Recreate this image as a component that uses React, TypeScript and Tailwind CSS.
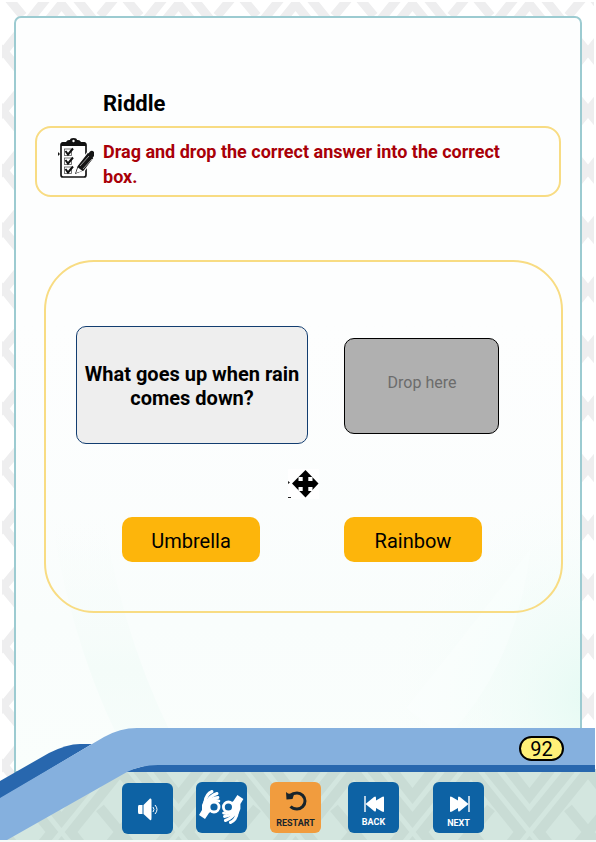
import React from "react";

const font = "font-['Roboto','Liberation_Sans',sans-serif]";

// One repeat of the woven diamond wallpaper, centred on a diamond.
function DiamondTile({ color, width }: { color: string; width: number }) {
  return (
    <g fill="none" stroke={color} strokeWidth={width}>
      <path d="M58.500 -12L116 59.500L58.500 131L1 59.500Z" />
      <path d="M58.500 12L97 59.500L58.500 107L20 59.500Z" />
      <path d="M58.500 36L77 59.500L58.500 83L40 59.500Z" />
      <path d="M-20 24L0 0L20 24M97 24L117 0L137 24M-20 95L0 119L20 95M97 95L117 119L137 95" />
    </g>
  );
}

function MarginWallpaper() {
  return (
    <svg className="absolute inset-0 h-full w-full" aria-hidden="true">
      <defs>
        <pattern id="margin" width="117" height="119" x="1" y="-10" patternUnits="userSpaceOnUse">
          <DiamondTile color="#eeeeef" width={9} />
        </pattern>
      </defs>
      <rect width="100%" height="100%" fill="url(#margin)" />
    </svg>
  );
}

function Clipboard() {
  return (
    <svg className="mt-[10px] ml-[21px] h-[42px] w-[37px] shrink-0" viewBox="0 0 37 42">
      <rect x="3" y="5" width="25" height="34" rx="2" fill="white" stroke="#151515" strokeWidth="1.700" />
      <path d="M3 8V5.500Q3 4 5 4H8Q9 2 11 2H12Q12 0 15.500 0Q19 0 19 2H20Q22 2 23 4H26Q28 4 28 6V8Z" fill="#111" />
      <circle cx="15.500" cy="3" r="1.200" fill="white" />
      <g fill="white" stroke="#555" strokeWidth=".8">
        <rect x="6.500" y="11" width="7" height="6.500" /><rect x="6.500" y="20" width="7" height="6.500" /><rect x="6.500" y="29" width="7" height="6.500" />
      </g>
      <path d="M7.500 13L10 16.500L15 10.500M7.500 22L10 25.500L15 19.500M7.500 31L10 34.500L15 28.500" fill="none" stroke="#111" strokeWidth="2" />
      <path d="M16 37L19 28L30 14L36 20L26 33Z" fill="#151515" stroke="white" strokeWidth="1.200" />
      <path d="M18 35L20 29.500L24.500 33Z" fill="white" />
      <path d="M22 28L31 18M25 31L34 21" stroke="#bbb" strokeWidth=".8" />
      <path d="M30 16L32 13.500Q34 12 36 14V18L34.500 20Z" fill="#151515" />
      <path d="M0 14L2 16L0 18Z" fill="#151515" />
    </svg>
  );
}

function MoveIcon() {
  return (
    <svg className="mt-[25px] ml-[242px] h-[30px] w-[31px] shrink-0" viewBox="0 0 31 30">
      <rect width="31" height="30" fill="white" />
      <path d="M17.500 1L30.500 14.500L17.500 28.500L4 14.500Z" fill="black" />
      <g fill="white"><rect x="10.500" y="8" width="4.200" height="4" /><rect x="20.300" y="8" width="4.200" height="4" /><rect x="10.500" y="18" width="4.200" height="4" /><rect x="20.300" y="18" width="4.200" height="4" /></g>
      <path d="M0 12L2 13.500L0 15ZM0 28H3V29H0Z" fill="#222" />
    </svg>
  );
}

function Hand() {
  return (
    <>
      <path d="M3 33L6 28V23Q7 19 10 16L18 20L24 23L13 31L9 37Z" fill="white" />
      <g fill="none" stroke="white" strokeLinecap="round">
        <path d="M9 20Q10 12 16 9.500" strokeWidth="3" />
        <path d="M11 20Q14 14 21 11.500" strokeWidth="3" />
        <path d="M13 20Q16 16 22 15.500" strokeWidth="2.800" />
        <path d="M16 19.500Q19 17.500 23 19" strokeWidth="2.500" />
      </g>
      <circle cx="18" cy="25" r="5" fill="#0d62a4" stroke="white" strokeWidth="2.800" />
    </>
  );
}

function SigningHands() {
  return (
    <svg className="h-[51px] w-[51px]" viewBox="0 0 51 51">
      <Hand />
      <g transform="rotate(180 25.2 25)"><Hand /></g>
    </svg>
  );
}

function SkipIcon({ next = false }: { next?: boolean }) {
  return (
    <svg className={next ? "block h-[18px] w-5" : "block h-[18px] w-5 -scale-x-100"} viewBox="0 0 20 18" fill="white">
      <path d="M0 2.500Q0 1 2 2L8 5.500V3Q8 .5 10 2L18.500 9L10 16Q8 17.500 8 15V13L2 16.500Q0 17.500 0 16Z" />
      <path d="M18.300 1H19.700V17H18.300Z" />
    </svg>
  );
}

const blue = "flex h-[51px] w-[51px] flex-col items-center rounded-[6px] bg-[#0d62a4] text-white";

export default function App() {
  return (
    <div className={`relative isolate flex h-[842px] w-[596px] flex-col overflow-hidden bg-white text-black ${font}`}>
      <div className="absolute top-[2px] right-[2px] bottom-0 left-[2px] -z-20"><MarginWallpaper /></div>
      <main className="relative mt-4 ml-[14px] flex h-[757px] w-[568px] shrink-0 flex-col rounded-t-[7px] border-2 border-[#9ccbd1] bg-[#fdfefe]">
        <div className="pointer-events-none absolute inset-0 overflow-hidden">
          <svg className="h-full w-full" viewBox="0 0 564 753">
            <defs>
              <radialGradient id="mint" gradientUnits="userSpaceOnUse" cx="580" cy="680" r="210"><stop offset="0" stopColor="#e5faf3" /><stop offset="1" stopColor="#f8fefc" stopOpacity="0" /></radialGradient>
              <linearGradient id="leaf" x2="0" y2="1"><stop offset=".4" stopColor="#fbfdfd" stopOpacity="0" /><stop offset=".8" stopColor="#f9fdfc" /><stop offset="1" stopColor="#fafefc" /></linearGradient>
              <linearGradient id="petal" x2="0" y2="1"><stop stopColor="#f8fcfb" stopOpacity="0" /><stop offset=".6" stopColor="#f4fcf9" /><stop offset="1" stopColor="#f7fdfb" /></linearGradient>
            </defs>
            <rect width="564" height="753" fill="url(#leaf)" />
            <path d="M35 500Q60 650 120 753H175Q110 640 88 500Z" fill="url(#petal)" />
            <rect x="300" y="450" width="264" height="303" fill="url(#mint)" />
            <path d="M430 720Q500 650 515 530Q470 590 390 690Z" fill="#fcfefe" opacity=".35" />
          </svg>
        </div>
        <h1 className="relative mt-[72px] ml-[87px] h-[28px] text-[22px] leading-[28px] font-bold">Riddle</h1>
        <section className="relative mt-[8px] ml-[19px] flex h-[71px] w-[526px] shrink-0 rounded-[16px] border-2 border-[#f8dc83]">
          <Clipboard />
          <p className="mt-[11px] ml-[8px] w-[410px] text-[18px] leading-[25px] font-bold text-[#a90008]">Drag and drop the correct answer into the correct box.</p>
        </section>
        <section className="relative mt-[63px] ml-[28px] flex h-[353px] w-[519px] shrink-0 flex-col rounded-[50px] border-2 border-[#f8dc83]">
          <div className="mt-[64px] ml-[30px] flex h-[118px] shrink-0 items-start gap-9">
            <div className="flex h-[118px] w-[232px] items-center justify-center rounded-[10px] border border-[#123d70] bg-[#eee] pt-0.5 text-center text-[20px] leading-6 font-bold"><span>What goes up when rain<br />comes down?</span></div>
            <div className="mt-3 flex h-[96px] w-[155px] items-center justify-center rounded-[10px] border border-black bg-[#b0b0b0] pb-1.5 pl-px text-[16px] text-[#6c6c6c]">Drop here</div>
          </div>
          <MoveIcon />
          <div className="mt-[18px] ml-[76px] flex gap-[84px] text-[20px]">
            <button className="h-[45px] w-[138px] rounded-[10px] bg-[#fdb50b] pt-[3px]">Umbrella</button>
            <button className="h-[45px] w-[138px] rounded-[10px] bg-[#fdb50b] pt-[3px]">Rainbow</button>
          </div>
        </section>
      </main>
      <footer className="absolute inset-x-0 top-[727px] h-[115px]">
        <svg className="absolute inset-0 h-full w-full" viewBox="0 0 596 115">
          <defs>
            <pattern id="foot" width="117" height="119" x="3" y="-14" patternUnits="userSpaceOnUse">
              <rect width="117" height="119" fill="#d3e6df" />
              <DiamondTile color="#c9dcd5" width={10} />
            </pattern>
          </defs>
          <path d="M0 112L128 42H596V113H0Z" fill="url(#foot)" />
          <path d="M0 113H596V115H0Z" fill="#f5faf8" />
          <path d="M0 54L49 26Q67 17 80 17H92L0 72Z" fill="#2867ae" />
          <path d="M126 44L148 38H595V45H126Z" fill="#2867ae" />
          <path d="M0 71L104 10Q120 1 137 1H595V38H158Q141 38 127 45L7 113H0Z" fill="#85b0de" />
        </svg>
        <div className="relative flex h-full flex-col">
          <div className="mt-[9px] ml-[519px] flex h-[25px] w-[45px] shrink-0 items-center justify-center rounded-full border-2 border-black bg-[#fff078] text-[20px] leading-5">92</div>
          <nav className="mt-[21px] ml-[122px] flex">
            <button className={`${blue} mt-px justify-center`} aria-label="Sound">
              <svg className="h-6 w-6" viewBox="0 0 24 24" fill="none" stroke="white"><path d="M3 8H6.500V17H3Q2 17 2 15V10Q2 8 3 8ZM7.500 8L14 1.500Q15.500 1 15.500 3V21Q15.500 24 14 23L7.500 17Z" fill="white" stroke="none" /><path d="M17 10Q19 12.500 17 15M19 8Q23 12.500 19 17" /></svg>
            </button>
            <button className={`${blue} ml-[23px]`} aria-label="Sign language"><SigningHands /></button>
            <button className="ml-[23px] flex h-[51px] w-[51px] flex-col items-center rounded-[6px] bg-[#f19c3e] text-[#18242b]">
              <svg className="mt-2 h-[22px] w-[22px]" viewBox="0 0 22 22"><path d="M5 5.500Q8 3 12 3A8 8 0 0 1 12 19Q8 19 5.500 16.500" fill="none" stroke="currentColor" strokeWidth="3" /><path d="M1 2L3 3.500L9 4.500L7.500 9L1.500 9.500Z" fill="currentColor" /></svg>
              <span className="mt-[5px] text-[9px] leading-3 font-bold">RESTART</span>
            </button>
            <button className={`${blue} ml-[27px]`}><span className="mt-[13px]"><SkipIcon /></span><span className="mt-[3px] text-[9px] leading-3 font-bold">BACK</span></button>
            <button className={`${blue} ml-[34px]`}><span className="mt-[13px] ml-0.5"><SkipIcon next /></span><span className="mt-1 text-[9px] leading-3 font-bold">NEXT</span></button>
          </nav>
        </div>
      </footer>
    </div>
  );
}
